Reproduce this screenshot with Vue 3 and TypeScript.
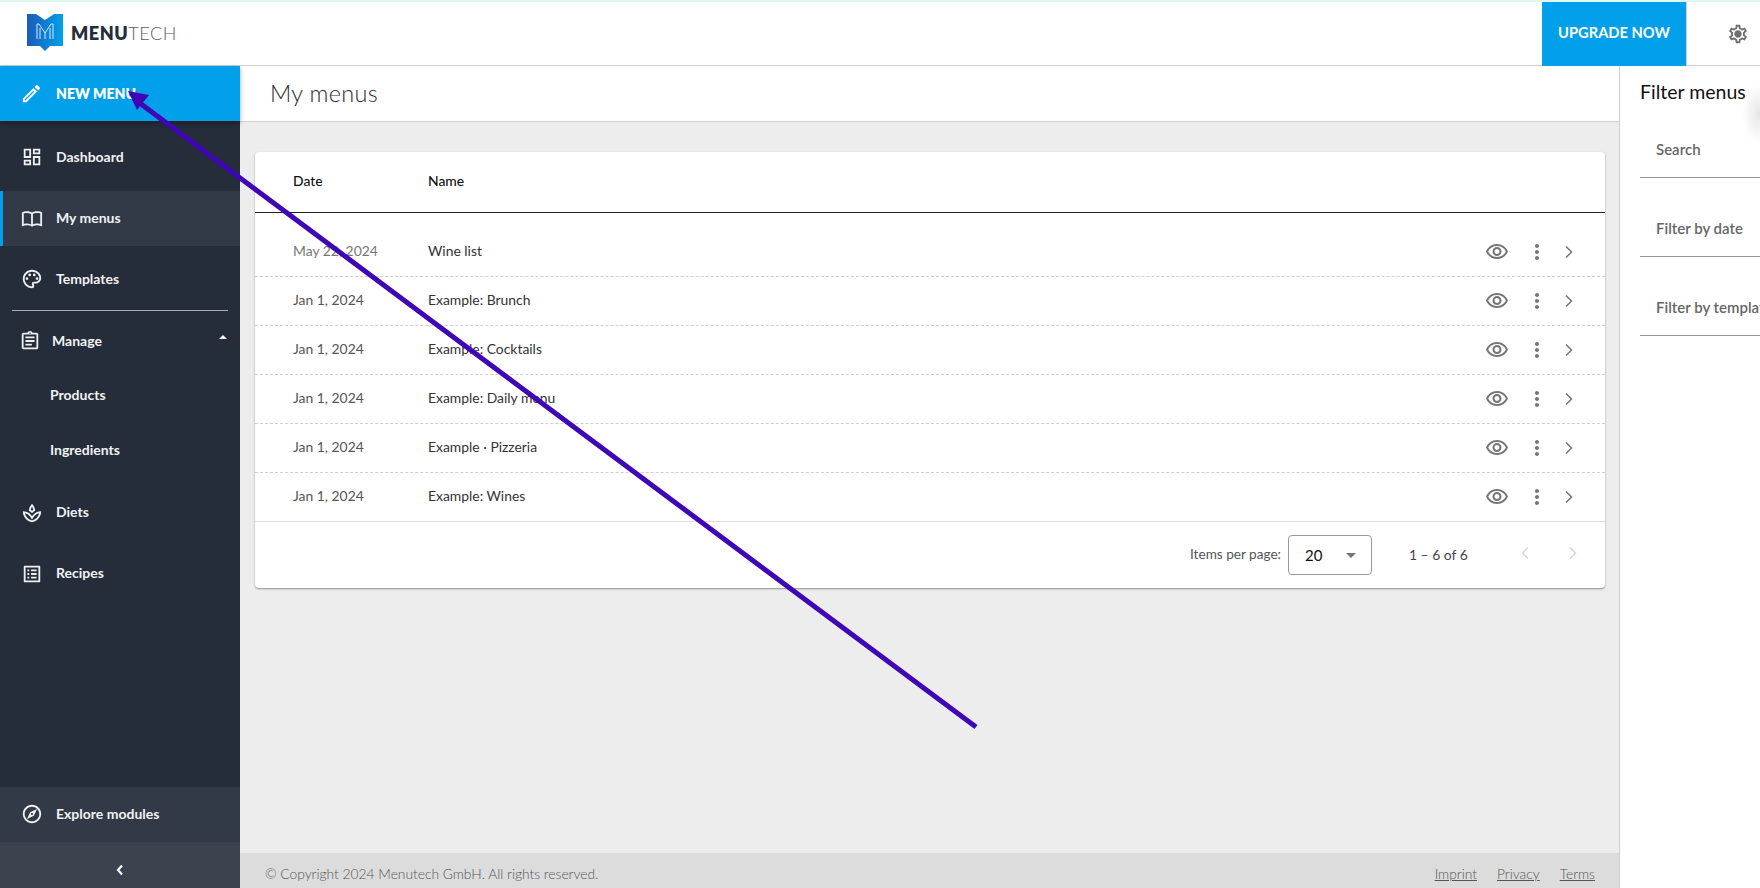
<script setup lang="ts">
interface NavItem { label: string; d: string; active?: boolean; sub?: boolean; }
const icons: Record<string, string> = {
  dashboard: 'M19 5v2h-4V5h4M9 5v6H5V5h4m10 8v6h-4v-6h4M9 17v2H5v-2h4M21 3h-8v6h8V3zM11 3H3v10h8V3zm10 8h-8v10h8V11zM11 15H3v6h8v-6z',
  book: 'M21 5c-1.11-.35-2.33-.5-3.5-.5-1.95 0-4.05.4-5.5 1.5-1.45-1.1-3.55-1.5-5.5-1.5S2.45 4.9 1 6v14.65c0 .25.25.5.5.5.1 0 .15-.05.25-.05C3.1 20.45 5.05 20 6.5 20c1.95 0 4.05.4 5.5 1.5 1.35-.85 3.8-1.5 5.5-1.5 1.65 0 3.35.3 4.75 1.05.1.05.15.05.25.05.25 0 .5-.25.5-.5V6c-.6-.45-1.25-.75-2-1zM3 18.5V7c1.1-.35 2.3-.5 3.5-.5 1.34 0 3.13.41 4.5 1v11.5c-1.37-.59-3.16-1-4.5-1-1.2 0-2.4.15-3.5.5zm18 0c-1.1-.35-2.3-.5-3.5-.5-1.7 0-3.6.41-4.5 1V7.5c.9-.59 2.8-1 4.5-1 1.2 0 2.4.15 3.5.5v11.5z',
  palette: 'M12 22C6.49 22 2 17.51 2 12S6.49 2 12 2s10 4.04 10 9c0 3.31-2.69 6-6 6h-1.77c-.28 0-.5.22-.5.5 0 .12.05.23.13.33.41.47.64 1.06.64 1.67A2.5 2.5 0 0 1 12 22zm0-18c-4.41 0-8 3.59-8 8s3.59 8 8 8c.28 0 .5-.22.5-.5a.54.54 0 0 0-.14-.35c-.41-.46-.63-1.05-.63-1.65a2.5 2.5 0 0 1 2.5-2.5H16c2.21 0 4-1.79 4-4 0-3.86-3.59-7-8-7zM6.5 13a1.5 1.5 0 1 0 0-3 1.5 1.5 0 0 0 0 3zm3-4a1.5 1.5 0 1 0 0-3 1.5 1.5 0 0 0 0 3zm5 0a1.5 1.5 0 1 0 0-3 1.5 1.5 0 0 0 0 3zm3 4a1.5 1.5 0 1 0 0-3 1.5 1.5 0 0 0 0 3z',
  assignment: 'M7 15h7v2H7zm0-4h10v2H7zm0-4h10v2H7zm12-4h-4.18C14.4 1.84 13.3 1 12 1c-1.3 0-2.4.84-2.82 2H5c-.14 0-.27.01-.4.04-.39.08-.74.28-1.01.55-.18.18-.33.4-.43.64-.1.23-.16.49-.16.77v14c0 .27.06.54.16.78s.25.45.43.64c.27.27.62.47 1.01.55.13.02.26.03.4.03h14c1.1 0 2-.9 2-2V5c0-1.1-.9-2-2-2zm-7-.25c.41 0 .75.34.75.75s-.34.75-.75.75-.75-.34-.75-.75.34-.75.75-.75zM19 19H5V5h14v14z',
  spa: 'M15.49 9.63c-.18-2.79-1.31-5.51-3.43-7.63a12.188 12.188 0 0 0-3.55 7.63c1.28.68 2.46 1.56 3.49 2.63 1.03-1.06 2.21-1.94 3.49-2.63zm-3.44-4.44c.63 1.03 1.07 2.18 1.3 3.38-.47.3-.91.63-1.34.98-.42-.34-.87-.67-1.33-.97.25-1.2.71-2.35 1.37-3.39zM12 15.45a12.11 12.11 0 0 0-3.06-3.4c-.13-.09-.27-.16-.4-.26.13.09.27.17.39.25A11.777 11.777 0 0 0 2 10c0 5.32 3.36 9.82 8.03 11.49.63.23 1.29.4 1.97.51.68-.12 1.33-.29 1.97-.51C18.64 19.82 22 15.32 22 10c-4.18 0-7.85 2.17-10 5.45zm1.32 4.15c-.44.15-.88.27-1.33.37-.44-.09-.87-.21-1.29-.36-3.29-1.18-5.7-3.99-6.45-7.35 1.1.26 2.15.71 3.12 1.33l-.02.01c.13.09.26.18.39.25l.07.04c.99.72 1.84 1.61 2.51 2.65L12 19.1l1.67-2.55a10.14 10.14 0 0 1 2.53-2.66l.07-.05c.09-.05.18-.11.27-.17l-.01-.02c.98-.65 2.07-1.13 3.21-1.4-.75 3.37-3.15 6.18-6.42 7.35z',
  list: 'M19 5v14H5V5h14m1.1-2H3.9c-.5 0-.9.4-.9.9v16.2c0 .4.4.9.9.9h16.2c.4 0 .9-.5.9-.9V3.9c0-.5-.5-.9-.9-.9zM11 7h6v2h-6V7zm0 4h6v2h-6v-2zm0 4h6v2h-6zM7 7h2v2H7zm0 4h2v2H7zm0 4h2v2H7z',
  explore: 'M12 2C6.48 2 2 6.48 2 12s4.48 10 10 10 10-4.48 10-10S17.52 2 12 2zm0 18c-4.41 0-8-3.59-8-8s3.59-8 8-8 8 3.59 8 8-3.59 8-8 8zm-5.5-2.5l7.51-3.49L17.5 6.5 9.99 9.99 6.5 17.5zm5.5-6.6c.61 0 1.1.49 1.1 1.1s-.49 1.1-1.1 1.1-1.1-.49-1.1-1.1.49-1.1 1.1-1.1z',
  edit: 'M14.06 9.02l.92.92L5.92 19H5v-.92l9.06-9.06M17.66 3c-.25 0-.51.1-.7.29l-1.83 1.83 3.75 3.75 1.83-1.83c.39-.39.39-1.02 0-1.41l-2.34-2.34c-.2-.2-.45-.29-.71-.29zm-3.6 3.19L3 17.25V21h3.75L17.81 9.94l-3.75-3.75z',
  gear: 'M19.43 12.98c.04-.32.07-.64.07-.98 0-.34-.03-.66-.07-.98l2.11-1.65c.19-.15.24-.42.12-.64l-2-3.46a.5.5 0 0 0-.61-.22l-2.49 1c-.52-.4-1.08-.73-1.69-.98l-.38-2.65A.488.488 0 0 0 14 2h-4c-.25 0-.46.18-.49.42l-.38 2.65c-.61.25-1.17.59-1.69.98l-2.49-1a.566.566 0 0 0-.18-.03c-.17 0-.34.09-.43.25l-2 3.46c-.13.22-.07.49.12.64l2.11 1.65c-.04.32-.07.65-.07.98 0 .33.03.66.07.98l-2.11 1.65c-.19.15-.24.42-.12.64l2 3.46a.5.5 0 0 0 .61.22l2.49-1c.52.4 1.08.73 1.69.98l.38 2.65c.03.24.24.42.49.42h4c.25 0 .46-.18.49-.42l.38-2.65c.61-.25 1.17-.59 1.69-.98l2.49 1c.06.02.12.03.18.03.17 0 .34-.09.43-.25l2-3.46c.12-.22.07-.49-.12-.64l-2.11-1.65zm-1.98-1.71c.04.31.05.52.05.73 0 .21-.02.43-.05.73l-.14 1.13.89.7 1.08.84-.7 1.21-1.27-.51-1.04-.42-.9.68c-.43.32-.84.56-1.25.73l-1.06.43-.16 1.13-.2 1.35h-1.4l-.19-1.35-.16-1.13-1.06-.43c-.43-.18-.83-.41-1.23-.71l-.91-.7-1.06.43-1.27.51-.7-1.21 1.08-.84.89-.7-.14-1.13c-.03-.31-.05-.54-.05-.74s.02-.43.05-.73l.14-1.13-.89-.7-1.08-.84.7-1.21 1.27.51 1.04.42.9-.68c.43-.32.84-.56 1.25-.73l1.06-.43.16-1.13.2-1.35h1.39l.19 1.35.16 1.13 1.06.43c.43.18.83.41 1.23.71l.91.7 1.06-.43 1.27-.51.7 1.21-1.07.85-.89.7.14 1.13zM12 8c-2.21 0-4 1.79-4 4s1.79 4 4 4 4-1.79 4-4-1.79-4-4-4z',
  eye: 'M12 6a9.77 9.77 0 0 1 8.82 5.5C19.17 14.87 15.79 17 12 17s-7.17-2.13-8.82-5.5A9.77 9.77 0 0 1 12 6m0-2C7 4 2.73 7.11 1 11.5 2.73 15.89 7 19 12 19s9.27-3.11 11-7.5C21.27 7.11 17 4 12 4zm0 5a2.5 2.5 0 0 1 0 5 2.5 2.5 0 0 1 0-5m0-2c-2.48 0-4.5 2.02-4.5 4.5S9.52 16 12 16s4.5-2.02 4.5-4.5S14.48 7 12 7z',
  dots: 'M12 8c1.1 0 2-.9 2-2s-.9-2-2-2-2 .9-2 2 .9 2 2 2zm0 2c-1.1 0-2 .9-2 2s.9 2 2 2 2-.9 2-2-.9-2-2-2zm0 6c-1.1 0-2 .9-2 2s.9 2 2 2 2-.9 2-2-.9-2-2-2z'
};
const topNav: NavItem[] = [
  { label: 'Dashboard', d: icons.dashboard },
  { label: 'My menus', d: icons.book, active: true },
  { label: 'Templates', d: icons.palette }
];
const lowNav: NavItem[] = [
  { label: 'Diets', d: icons.spa },
  { label: 'Recipes', d: icons.list }
];
const rows = [
  { date: 'May 22, 2024', name: 'Wine list' },
  { date: 'Jan 1, 2024', name: 'Example: Brunch' },
  { date: 'Jan 1, 2024', name: 'Example: Cocktails' },
  { date: 'Jan 1, 2024', name: 'Example: Daily menu' },
  { date: 'Jan 1, 2024', name: 'Example · Pizzeria' },
  { date: 'Jan 1, 2024', name: 'Example: Wines' }
];
const filters = ['Search', 'Filter by date', 'Filter by template'];
</script>

<template>
  <div class="app">
    <header class="topbar">
      <div class="brand">
        <svg class="logo" viewBox="0 0 36 37" width="36" height="37">
          <defs>
            <linearGradient id="lg" x1="0" y1="0" x2="1" y2="0">
              <stop offset="0" stop-color="#1a5cb8" />
              <stop offset="1" stop-color="#02a0ea" />
            </linearGradient>
          </defs>
          <path d="M0 0h9l9 6 9-6h9v32H23l-5 5-5-5H0z" fill="url(#lg)" />
          <path d="M10 25V10h2l6 9 6-9h2v15M13 25V14M23 25V14M18 19v6" fill="none" stroke="#d5e9fb" stroke-width="1" />
        </svg>
        <span class="word"><b>MENU</b>TECH</span>
      </div>
      <button class="upgrade">UPGRADE NOW</button>
      <div class="settings">
        <svg viewBox="0 0 24 24" width="22" height="22"><path :d="icons.gear" fill="#6f6f6f" /></svg>
      </div>
    </header>

    <div class="shell">
      <aside class="sidebar">
        <a class="new"><svg viewBox="0 0 24 24" width="23" height="23"><path :d="icons.edit" fill="#fff" /></svg><span>NEW MENU</span></a>
        <nav class="nav top">
          <a v-for="n in topNav" :key="n.label" class="item" :class="{ active: n.active }">
            <svg viewBox="0 0 24 24" width="22" height="22"><path :d="n.d" fill="#eef0f2" /></svg>
            <span>{{ n.label }}</span>
          </a>
        </nav>
        <div class="rule"></div>
        <a class="item manage">
          <svg viewBox="0 0 24 24" width="22" height="22"><path :d="icons.assignment" fill="#eef0f2" /></svg>
          <span>Manage</span>
          <i class="caret"></i>
        </a>
        <a class="item sub"><span>Products</span></a>
        <a class="item sub"><span>Ingredients</span></a>
        <nav class="nav low">
          <a v-for="n in lowNav" :key="n.label" class="item">
            <svg viewBox="0 0 24 24" width="22" height="22"><path :d="n.d" fill="#eef0f2" /></svg>
            <span>{{ n.label }}</span>
          </a>
        </nav>
        <a class="item explore">
          <svg viewBox="0 0 24 24" width="22" height="22"><path :d="icons.explore" fill="#eef0f2" /></svg>
          <span>Explore modules</span>
        </a>
        <div class="collapse">
          <svg viewBox="0 0 10 12" width="10" height="12"><path d="M7 1.5 3 6l4 4.5" fill="none" stroke="#fff" stroke-width="2.2" /></svg>
        </div>
      </aside>

      <main class="main">
        <div class="title"><h1>My menus</h1></div>
        <div class="content">
          <section class="card">
            <div class="thead"><span class="c-date">Date</span><span>Name</span></div>
            <div class="tbody">
              <div v-for="r in rows" :key="r.name" class="row">
                <span class="c-date date">{{ r.date }}</span>
                <span class="name">{{ r.name }}</span>
                <span class="actions">
                  <svg class="a-eye" viewBox="0 0 24 24" width="24" height="24"><path :d="icons.eye" fill="#757575" /></svg>
                  <svg class="a-dots" viewBox="0 0 24 24" width="24" height="24"><path :d="icons.dots" fill="#757575" /></svg>
                  <svg class="a-chev" viewBox="0 0 10 14" width="10" height="14"><path d="M2 1.5 7.5 7 2 12.5" fill="none" stroke="#757575" stroke-width="1.5" /></svg>
                </span>
              </div>
            </div>
            <div class="pager">
              <span class="ipp">Items per page:</span>
              <div class="select"><span>20</span><i class="tri"></i></div>
              <span class="range">1 – 6 of 6</span>
              <svg class="nav-prev" viewBox="0 0 10 14" width="10" height="14"><path d="M8 1.5 2.5 7 8 12.5" fill="none" stroke="#d6d6d6" stroke-width="1.5" /></svg>
              <svg class="nav-next" viewBox="0 0 10 14" width="10" height="14"><path d="M2 1.5 7.5 7 2 12.5" fill="none" stroke="#d6d6d6" stroke-width="1.5" /></svg>
            </div>
          </section>
        </div>
        <footer class="footer">
          <span>© Copyright 2024 Menutech GmbH. All rights reserved.</span>
          <span class="links"><a>Imprint</a><a>Privacy</a><a>Terms</a></span>
        </footer>
      </main>

      <aside class="filters">
        <h2>Filter menus</h2>
        <div v-for="f in filters" :key="f" class="field"><span>{{ f }}</span></div>
        <div class="edge"></div>
      </aside>
    </div>

    <svg class="arrow" width="1760" height="888" viewBox="0 0 1760 888">
      <line x1="976" y1="727" x2="137" y2="101" stroke="#3f06b5" stroke-width="5" />
      <polygon points="128,91 149,95 137,110" fill="#3f06b5" />
    </svg>
  </div>
</template>

<style>
html, body { margin: 0; padding: 0; overflow: hidden; background: #fff; }
</style>

<style scoped>
.app {
  position: relative;
  width: 1760px;
  height: 888px;
  overflow: hidden;
  display: flex;
  flex-direction: column;
  font-family: Lato, "Noto Sans", sans-serif;
  color: #222;
  background: #fff;
  box-sizing: border-box;
  border-top: 2px solid #dff8f2;
}
.topbar {
  height: 63px;
  flex: none;
  display: flex;
  align-items: stretch;
  border-bottom: 1px solid #cfcfcf;
  box-sizing: content-box;
}
.brand { display: flex; align-items: center; gap: 8px; padding-left: 27px; margin-right: auto; height: 63px; }
.logo { display: block; margin-top: -2px; }
.word { font-size: 18px; letter-spacing: 0.55px; color: #555b65; font-weight: 300; margin-top: -2px; }
.word b { color: #262d3a; font-weight: 800; }
.upgrade {
  width: 144px;
  height: 64px;
  border: 0;
  background: #02a0ea;
  color: #fff;
  font: 700 14.7px Lato, sans-serif;
  padding: 0 0 4px;
}
.settings { width: 74px; border-left: 1px solid #cfcfcf; display: flex; align-items: center; justify-content: center; padding-left: 29px; box-sizing: border-box; }

.shell { flex: 1; display: flex; min-height: 0; }
.sidebar {
  width: 240px;
  flex: none;
  background: #252c3a;
  display: flex;
  flex-direction: column;
}
.new {
  height: 55px;
  flex: none;
  background: #02a0ea;
  color: #fff;
  display: flex;
  align-items: center;
  gap: 13px;
  padding-left: 20px;
  font-weight: 800;
  font-size: 14px;
  box-shadow: 0 2px 5px rgba(0,0,0,.35);
  position: relative;
}
.nav { display: flex; flex-direction: column; gap: 6px; }
.top { margin-top: 9px; }
.low { margin-top: 7px; }
.item {
  height: 55px;
  flex: none;
  display: flex;
  align-items: center;
  gap: 13px;
  padding: 0 0 1px 21px;
  color: #f1f2f3;
  font-weight: 700;
  font-size: 14px;
  box-sizing: border-box;
}
.item svg { flex: none; }
.item span { margin-bottom: 2px; }
.item.active { background: #333a47; border-left: 3px solid #02a0ea; padding-left: 18px; }
.rule { height: 1px; margin: 3px 12px 3px; background: #a8abb0; flex: none; }
.manage { position: relative; gap: 11px; padding-left: 19px; padding-bottom: 2px; }
.manage span { margin-bottom: 0; }
.caret {
  position: absolute;
  right: 13px;
  top: 21px;
  border-left: 4px solid transparent;
  border-right: 4px solid transparent;
  border-bottom: 4px solid #fff;
}
.sub { padding-left: 50px; padding-bottom: 3px; }
.low .item { padding-bottom: 2px; }
.explore { margin-top: auto; background: #333a47; }
.explore span { margin-bottom: 1px; }
.collapse {
  height: 46px;
  flex: none;
  background: #3c434f;
  display: flex;
  align-items: center;
  justify-content: center;
  padding-top: 10px;
  box-sizing: border-box;
}

.main { flex: 1; min-width: 0; display: flex; flex-direction: column; background: #ededed; border-right: 1px solid #cfcfcf; }
.title { height: 53px; flex: none; background: #fff; border-bottom: 1px solid #cfcfcf; display: flex; align-items: center; padding: 0 0 2px 30px; box-sizing: content-box; }
h1 { margin: 0; font: 300 23.5px Lato, sans-serif; color: #2c2c2c; letter-spacing: .3px; }
.content { flex: 1; padding: 30px 15px 0; min-height: 0; }
.card {
  width: 1350px;
  background: #fff;
  border-radius: 4px;
  box-shadow: 0 1px 2px rgba(0,0,0,.4);
  font-size: 13.9px;
}
.thead {
  height: 56px;
  border-bottom: 1px solid #222;
  display: flex;
  align-items: center;
  padding-left: 38px;
  padding-bottom: 4px;
  font-weight: 500;
  color: #111;
  box-sizing: content-box;
}
.c-date { width: 135px; flex: none; }
.tbody { padding-top: 15px; }
.row {
  height: 49px;
  box-sizing: border-box;
  border-bottom: 1px dashed #cfcfcf;
  display: flex;
  align-items: center;
  padding-left: 38px;
  position: relative;
}
.row:last-child { border-bottom: 1px solid #dedede; }
.date { color: #555; font-weight: 400; padding-bottom: 3px; }
.row:first-child .date { color: #777; }
.name { color: #333; padding-bottom: 3px; }
.actions { margin-left: auto; display: flex; align-items: center; margin-right: 31px; }
.a-dots { margin-left: 16px; }
.a-chev { margin-left: 15px; }
.pager { height: 66px; display: flex; align-items: center; color: #555; position: relative; }
.ipp { margin-left: 935px; width: 90px; white-space: nowrap; font-weight: 400; color: #555; font-size: 13.6px; padding-bottom: 2px; }
.select {
  margin-left: 8px;
  width: 84px;
  height: 40px;
  box-sizing: border-box;
  border: 1px solid #9a9a9a;
  border-radius: 4px;
  display: flex;
  align-items: center;
  justify-content: space-between;
  padding: 0 15px 0 16px;
  color: #111;
  font-size: 15px;
}
.tri { border-left: 5px solid transparent; border-right: 5px solid transparent; border-top: 5px solid #757575; }
.range { margin-left: 37px; width: 60px; white-space: nowrap; color: #444; font-weight: 400; padding-bottom: 2px; }
.nav-prev { margin-left: 51px; margin-bottom: 4px; }
.nav-next { margin-left: 38px; margin-bottom: 4px; }
.footer {
  height: 35px;
  flex: none;
  background: #dcdcdc;
  display: flex;
  justify-content: space-between;
  align-items: center;
  padding: 5px 24px 0 25px;
  font-size: 13.8px;
  font-weight: 300;
  color: #555;
  box-sizing: border-box;
}
.links { display: flex; gap: 20px; }
.links a { text-decoration: underline; }

.filters { width: 140px; flex: none; overflow: hidden; padding-left: 20px; box-sizing: border-box; position: relative; }
h2 { margin: 0; height: 51px; padding-bottom: 4px; display: flex; align-items: center; font: 400 19.5px Lato, sans-serif; color: #111; white-space: nowrap; }
.field {
  height: 79px;
  width: 200px;
  box-sizing: border-box;
  border-bottom: 1px solid #949494;
  display: flex;
  align-items: flex-end;
  padding: 0 0 19px 16px;
  font-size: 15px;
  color: #666;
  font-weight: 600;
  white-space: nowrap;
}
.field:first-of-type { height: 57px; }
.edge {
  position: absolute;
  right: -18px;
  top: 18px;
  width: 36px;
  height: 60px;
  background: radial-gradient(closest-side, rgba(0,0,0,.1), rgba(0,0,0,0));
}
.arrow { position: absolute; left: 0; top: -2px; pointer-events: none; }
</style>
